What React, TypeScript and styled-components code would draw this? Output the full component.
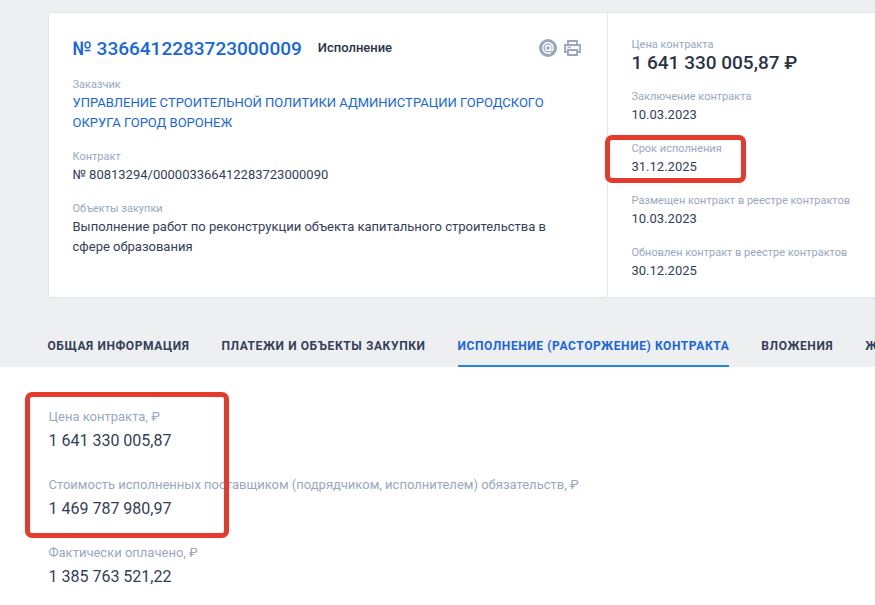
import styled, { createGlobalStyle } from "styled-components";

const tabs = [
  "Общая информация",
  "Платежи и объекты закупки",
  "Исполнение (расторжение) контракта",
  "Вложения",
  "Журнал событий",
];

const summary = [
  { label: "Заключение контракта", value: "10.03.2023" },
  { label: "Срок исполнения", value: "31.12.2025" },
  { label: "Размещен контракт в реестре контрактов", value: "10.03.2023" },
  { label: "Обновлен контракт в реестре контрактов", value: "30.12.2025" },
];

const amounts = [
  { label: "Цена контракта, ₽", value: "1 641 330 005,87" },
  {
    label:
      "Стоимость исполненных поставщиком (подрядчиком, исполнителем) обязательств, ₽",
    value: "1 469 787 980,97",
  },
  { label: "Фактически оплачено, ₽", value: "1 385 763 521,22" },
];

export default function App() {
  return (
    <Page>
      <GlobalStyle />
      <TopArea>
        <Card>
          <MainColumn>
            <TitleRow>
              <ContractNumber>№ 3366412283723000009</ContractNumber>
              <Status>Исполнение</Status>
              <Icons>
                <AtIcon />
                <PrintIcon />
              </Icons>
            </TitleRow>
            <Field>
              <Label>Заказчик</Label>
              <LinkValue>
                УПРАВЛЕНИЕ СТРОИТЕЛЬНОЙ ПОЛИТИКИ АДМИНИСТРАЦИИ ГОРОДСКОГО ОКРУГА
                ГОРОД ВОРОНЕЖ
              </LinkValue>
            </Field>
            <Field>
              <Label>Контракт</Label>
              <Value>№ 80813294/000003366412283723000090</Value>
            </Field>
            <Field>
              <Label>Объекты закупки</Label>
              <Value>
                Выполнение работ по реконструкции объекта капитального
                строительства в сфере образования
              </Value>
            </Field>
          </MainColumn>
          <SideColumn>
            <PriceBlock>
              <Label>Цена контракта</Label>
              <Price>1 641 330 005,87 ₽</Price>
            </PriceBlock>
            {summary.map((item) => (
              <SideField key={item.label}>
                <Label>{item.label}</Label>
                <Value>{item.value}</Value>
              </SideField>
            ))}
          </SideColumn>
        </Card>
        <TabBar>
          {tabs.map((tab) => (
            <Tab key={tab} $active={tab.startsWith("Исполнение")}>
              {tab}
            </Tab>
          ))}
        </TabBar>
      </TopArea>
      <Content>
        {amounts.map((item) => (
          <Amount key={item.label}>
            <AmountLabel>{item.label}</AmountLabel>
            <AmountValue>{item.value}</AmountValue>
          </Amount>
        ))}
      </Content>
      <DateMark />
      <AmountsMark />
    </Page>
  );
}

function AtIcon() {
  return (
    <svg width="18" height="18" viewBox="0 0 18 18" fill="none">
      <circle cx="9" cy="9" r="9" fill="#9aa6c0" />
      <circle cx="9" cy="9" r="2.500" stroke="#fff" strokeWidth="1.400" />
      <path
        d="M11.600 6.400v3.500c0 1 .6 1.500 1.300 1.500s1.300-.9 1.300-2.400c0-2.900-2.300-5.200-5.200-5.200a5.200 5.200 0 1 0 2.700 9.600"
        stroke="#fff"
        strokeWidth="1.400"
        strokeLinecap="round"
      />
    </svg>
  );
}

function PrintIcon() {
  return (
    <svg width="17" height="16" viewBox="0 0 17 16" fill="none">
      <path
        d="M4 5V1h9v4M4 12H1V5h15v7h-3"
        stroke="#9aa6c0"
        strokeWidth="1.800"
      />
      <path d="M4 10h9v5H4z" stroke="#9aa6c0" strokeWidth="1.800" />
      <path d="M3.500 7.500h3" stroke="#9aa6c0" strokeWidth="1.500" />
    </svg>
  );
}

const GlobalStyle = createGlobalStyle`
  html, body {
    margin: 0;
    background: #fff;
    overflow: hidden;
  }
  * {
    box-sizing: border-box;
  }
`;

const Page = styled.div`
  position: relative;
  width: 875px;
  height: 605px;
  overflow: hidden;
  font-family: Roboto, "Liberation Sans", sans-serif;
  color: #334059;
`;

const TopArea = styled.div`
  height: 367px;
  padding: 12px 0 0 47px;
  background: #eeeff1;
`;

const Card = styled.div`
  display: flex;
  width: 880px;
  height: 286px;
  margin-left: 1px;
  background: #fff;
  border: 1px solid #dfe6ee;
  border-radius: 3px;
`;

const MainColumn = styled.div`
  width: 559px;
  padding: 21px 24px 0 23.5px;
  border-right: 1px solid #e4e7ec;
  display: flex;
  flex-direction: column;
  gap: 17px;
`;

const TitleRow = styled.div`
  display: flex;
  align-items: center;
  height: 28px;
  margin-bottom: -1px;
`;

const ContractNumber = styled.div`
  font-size: 19px;
  font-weight: 500;
  color: #1766e0;
`;

const Status = styled.div`
  margin: 0 0 2px 16px;
  font-size: 13px;
  font-weight: 500;
  color: #2b3345;
`;

const Icons = styled.div`
  display: flex;
  align-items: center;
  gap: 7px;
  margin: 0 2px 0 auto;
`;

const Field = styled.div`
  display: flex;
  flex-direction: column;
`;

const Label = styled.div`
  font-size: 11px;
  line-height: 14px;
  color: #9aa7c2;
`;

const Value = styled.div`
  margin-top: 1px;
  font-size: 13px;
  line-height: 20px;
  color: #334059;
`;

const LinkValue = styled(Value)`
  color: #1766e0;
`;

const SideColumn = styled.div`
  flex: 1;
  padding: 25px 0 0 23.5px;
  display: flex;
  flex-direction: column;
  gap: 17px;
`;

const PriceBlock = styled.div`
  display: flex;
  flex-direction: column;
`;

const SideField = styled.div`
  display: flex;
  flex-direction: column;
`;

const Price = styled.div`
  font-size: 19px;
  line-height: 21px;
  font-weight: 500;
  color: #2b3345;
`;

const TabBar = styled.div`
  display: flex;
  gap: 32px;
  margin: 34px 0 0 0.5px;
  height: 35px;
  white-space: nowrap;
`;

const Tab = styled.div<{ $active?: boolean }>`
  padding-top: 4px;
  line-height: 20px;
  font-size: 12px;
  font-weight: 700;
  letter-spacing: 0.6px;
  text-transform: uppercase;
  color: ${(p) => (p.$active ? "#1766e0" : "#334059")};
  border-bottom: 2px solid ${(p) => (p.$active ? "#2188e8" : "transparent")};
`;

const Content = styled.div`
  padding: 42px 0 0 48.5px;
  display: flex;
  flex-direction: column;
  gap: 25px;
`;

const Amount = styled.div`
  display: flex;
  flex-direction: column;
  gap: 5px;
`;

const AmountLabel = styled.div`
  font-size: 13px;
  line-height: 16px;
  color: #9aa7c2;
`;

const AmountValue = styled.div`
  font-size: 16px;
  line-height: 22px;
  color: #334059;
`;

const Mark = styled.div`
  position: absolute;
  border: 5px solid #e53b2f;
  border-radius: 7px;
`;

const DateMark = styled(Mark)`
  left: 605px;
  top: 135px;
  width: 141px;
  height: 48px;
`;

const AmountsMark = styled(Mark)`
  left: 25px;
  top: 392px;
  width: 204px;
  height: 146px;
`;
